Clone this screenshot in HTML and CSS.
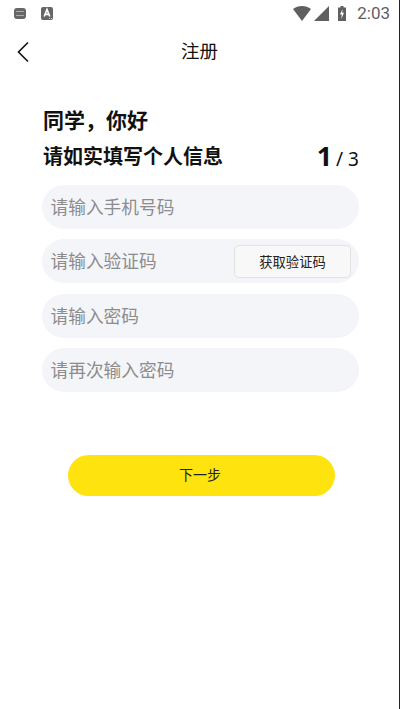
FILE: index.html
```html
<!DOCTYPE html>
<html lang="zh-CN">

<head>
    <meta charset="UTF-8">
    <meta name="viewport" content="width=device-width, initial-scale=1.0">
    <title>注册</title>
    <link rel="stylesheet" href="styles.css">
</head>

<body>
    <div class="page">
        <div class="status-bar">
            <div class="status-left">
                <div class="app-icon app-icon-a"><span class="app-icon-lines"></span></div>
                <div class="app-icon app-icon-b">
                    <svg width="12" height="13" viewBox="0 0 12 13"><path d="M3.200 9.500 6 2.500l2.800 7M4.200 7.400h3.600" fill="none" stroke="#fff" stroke-width="1.600"/><path d="M8 11.500h1M10 11.500h1" stroke="#ccc"/></svg>
                </div>
            </div>
            <div class="status-right">
                <svg class="wifi" width="18" height="15" viewBox="0 0 18 15"><path d="M0 3C2.500 1 5.600 0 9 0s6.500 1 9 3L9 15z" fill="#5f5f5f"/></svg>
                <svg class="signal" width="15" height="15" viewBox="0 0 15 15"><path d="M15 0v15H0z" fill="#5f5f5f"/></svg>
                <svg class="battery" width="8" height="15" viewBox="0 0 8 15"><path d="M2.500 0h3v1.500H8V15H0V1.500h2.500z" fill="#5f5f5f"/><path d="M4.600 3 2 8.500h1.800L3.300 13 6 6.800H4.200z" fill="#fff"/></svg>
                <span class="clock">2:03</span>
            </div>
        </div>

        <div class="title-bar">
            <a class="back" href="javascript:;">
                <svg width="14" height="22" viewBox="0 0 14 22"><path d="M12 1.500 2.500 11l9.500 9.500" fill="none" stroke="#111" stroke-width="1.600"/></svg>
            </a>
            <h1>注册</h1>
        </div>

        <div class="content">
            <h2>同学，你好</h2>
            <div class="sub-row">
                <h3>请如实填写个人信息</h3>
                <div class="steps"><b>1</b><span>/ 3</span></div>
            </div>

            <div class="field"><span class="hint">请输入手机号码</span></div>
            <div class="field field-code">
                <span class="hint">请输入验证码</span>
                <a class="code-btn" href="javascript:;">获取验证码</a>
            </div>
            <div class="field"><span class="hint">请输入密码</span></div>
            <div class="field"><span class="hint">请再次输入密码</span></div>

            <a class="next-btn" href="javascript:;">下一步</a>
        </div>
    </div>
</body>

</html>
```

FILE: styles.css
```css
* {
    margin: 0;
    padding: 0;
    box-sizing: border-box;
}

body {
    background-color: white;
    font-family: "Noto Sans CJK SC", "Noto Sans", sans-serif;
    color: #111;
}

a {
    text-decoration: none;
    color: inherit;
}

.page {
    width: 400px;
    height: 709px;
    border-right: 1px solid #222;
    overflow: hidden;
}

.status-bar {
    height: 26px;
    display: flex;
    justify-content: space-between;
    align-items: center;
    padding: 0 9px 0 14px;
}

.status-left {
    display: flex;
    gap: 15px;
    align-items: center;
}

.app-icon {
    background-color: #666;
    border-radius: 2px;
    display: flex;
    align-items: center;
    justify-content: center;
}

.app-icon-a {
    width: 12px;
    height: 11px;
    border-radius: 3px;
}

.app-icon-lines {
    width: 8px;
    height: 5px;
    border-top: 1px solid #aaa;
    border-bottom: 1px solid #aaa;
}

.app-icon-b {
    width: 12px;
    height: 13px;
}

.status-right {
    display: flex;
    align-items: center;
}

.signal {
    margin-left: 3px;
}

.battery {
    margin-left: 9px;
}

.clock {
    margin-left: 11px;
    font-family: "Roboto", sans-serif;
    font-size: 17px;
    color: #5f5f5f;
}

.title-bar {
    height: 50px;
    display: grid;
    grid-template-columns: 1fr auto 1fr;
    align-items: center;
    padding: 0 16px 2px;
}

.title-bar h1 {
    font-size: 18.500px;
    font-weight: 400;
}

.back {
    display: block;
    height: 22px;
    align-self: start;
    margin-top: 15px;
}

.content {
    padding: 27px 40px 0 42px;
}

.content h2 {
    font-size: 21px;
    font-weight: 700;
    line-height: 32px;
    padding-left: 1px;
}

.sub-row {
    display: flex;
    justify-content: space-between;
    align-items: center;
    height: 38px;
    margin-top: 1px;
    margin-bottom: 11px;
    padding-left: 1px;
}

.sub-row h3 {
    font-size: 20px;
    font-weight: 700;
}

.steps {
    display: flex;
    align-items: baseline;
    gap: 4px;
    font-family: "Noto Sans", sans-serif;
    font-size: 19px;
}

.steps b {
    font-size: 27px;
    font-weight: 700;
}

.field {
    height: 44px;
    border-radius: 22px;
    background-color: #f4f5f9;
    margin-bottom: 10.400px;
    padding-left: 9px;
    font-size: 17.700px;
    color: #8c8c8c;
    display: flex;
    align-items: center;
}

.hint {
    margin-left: -0.500px;
    padding-bottom: 2px;
}

.field-code {
    justify-content: space-between;
    padding-right: 8px;
}

.code-btn {
    width: 117px;
    height: 33px;
    border: 1px solid #e2e2e2;
    border-radius: 5px;
    background-color: #f8f8f8;
    color: #222;
    font-size: 13.300px;
    display: flex;
    align-items: center;
    justify-content: center;
}

.next-btn {
    display: flex;
    align-items: center;
    justify-content: center;
    width: 267px;
    height: 41px;
    margin: 63px 0 0 25.500px;
    padding: 0 2px 3px 0;
    border-radius: 21px;
    background-color: #ffe30f;
    font-size: 14px;
    color: #222;
}
```
